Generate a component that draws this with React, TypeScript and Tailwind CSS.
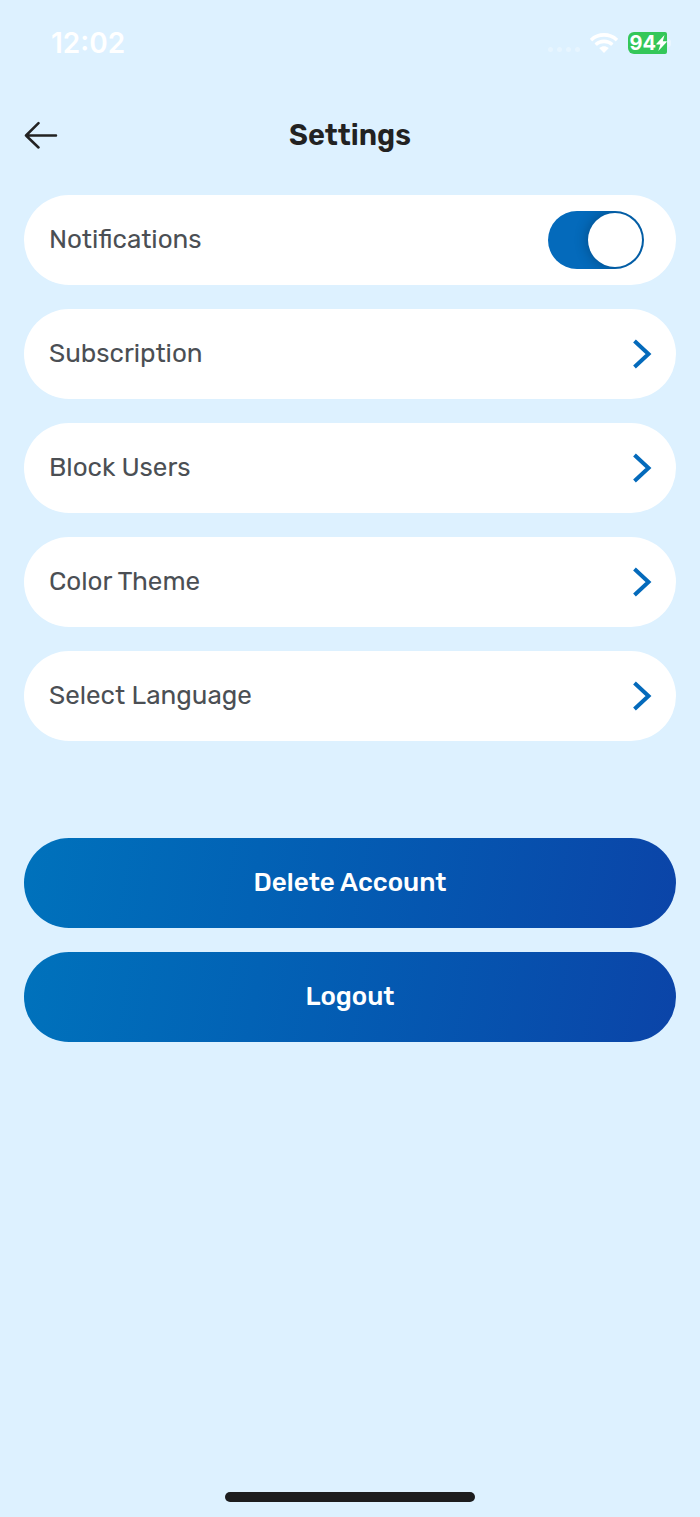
import React, { useState } from 'react';

const menuItems = ['Subscription', 'Block Users', 'Color Theme', 'Select Language'];

const accountActions = ['Delete Account', 'Logout'];

const StatusBar = () => (
    <div className="flex h-[86px] items-center justify-between pl-[51px] pr-[29px] text-white">
        <span className="font-['Inter',sans-serif] text-[28px] leading-8 font-semibold">12:02</span>
        <div className="flex items-center">
            {/* Signal dots */}
            <div className="mt-3 mr-[10px] flex gap-1 opacity-30">
                {[0, 1, 2, 3].map((dot) => (
                    <span key={dot} className="h-[5px] w-[5px] rounded-full bg-white" />
                ))}
            </div>
            <svg className="mr-[10px] h-5 w-7" viewBox="0 0 28 20" fill="currentColor" aria-hidden="true">
                <path d="M14 0C8.700 0 3.800 2 .2 5.400c-.3.300-.3.600 0 .9l1.600 1.600c.3.300.6.300.9 0C5.700 5.100 9.700 3.800 14 3.800s8.300 1.300 11.300 4.100c.3.300.6.300.9 0l1.600-1.600c.3-.3.300-.6 0-.9C24.200 2 19.300 0 14 0Z" />
                <path d="M14 6.500c-3.500 0-6.700 1.300-9.100 3.500-.3.300-.3.600 0 .9l1.600 1.700c.3.300.6.300.9 0 1.800-1.500 4.100-2.300 6.600-2.300s4.800.8 6.600 2.300c.3.300.6.300.9 0l1.600-1.700c.3-.3.300-.6 0-.9C20.700 7.800 17.500 6.500 14 6.500Z" />
                <path d="M14 13.200c-1.700 0-3.200.6-4.400 1.500-.3.300-.3.600 0 .9l3.900 4c.3.300.7.300 1 0l3.900-4c.3-.3.300-.6 0-.9-1.200-.9-2.700-1.500-4.400-1.500Z" />
            </svg>
            <div className="flex items-center">
                <div className="flex h-[22px] w-[39px] items-center justify-end rounded-l-md rounded-r-xs bg-[#34c759]">
                    <span className="font-['Inter',sans-serif] text-xl leading-[22px] font-bold">94</span>
                    <svg className="h-4 w-[11px]" viewBox="0 0 11 16" fill="currentColor" aria-hidden="true">
                        <path d="M8.500 0 .4 8.700c-.3.400-.1.800.4.800h3.600L2.300 16l8.400-9c.3-.4.100-.8-.4-.8H6.800L8.500 0Z" />
                    </svg>
                </div>
                <span className="ml-px h-2 w-[3px] rounded-r-full bg-white opacity-40" />
            </div>
        </div>
    </div>
);

export default function App() {
    const [notifications, setNotifications] = useState(true);

    return (
        <div className="flex min-h-screen flex-col bg-[#ddf1ff] font-['Rubik','Roboto',sans-serif]">
            <StatusBar />

            {/* Header */}
            <header className="grid h-[98px] grid-cols-[40px_1fr_40px] items-center px-6">
                <button type="button" aria-label="Back" className="flex h-10 w-10 items-center text-[#222222]">
                    <svg
                        className="h-7 w-[34px]"
                        viewBox="0 0 34 28"
                        fill="none"
                        stroke="currentColor"
                        strokeWidth="2.5"
                        strokeLinecap="round"
                        strokeLinejoin="round"
                        aria-hidden="true"
                    >
                        <path d="M14.500 2.200 2 14.500l12.500 12M2 14.500h30" />
                    </svg>
                </button>
                <h1 className="text-center text-[29px] leading-9 font-semibold text-[#222222]">Settings</h1>
            </header>

            <main className="flex flex-1 flex-col px-6 pt-[11px]">
                <div className="flex flex-col gap-6">
                    <label className="flex h-[90px] cursor-pointer items-center justify-between rounded-full bg-white pr-8 pl-[25px]">
                        <span className="text-[26px] leading-8 text-[#4b4f54]">Notifications</span>
                        <input
                            type="checkbox"
                            role="switch"
                            checked={notifications}
                            onChange={(e) => setNotifications(e.target.checked)}
                            className="flex h-[58px] w-24 cursor-pointer appearance-none items-center overflow-hidden rounded-full bg-gray-300 px-[2px] transition-colors before:h-[54px] before:w-[54px] before:rounded-full before:bg-white before:shadow-[0_0_14px_rgba(0,0,0,0.3)] before:transition-transform checked:bg-[#046abb] checked:before:translate-x-[38px]"
                        />
                    </label>

                    {menuItems.map((item) => (
                        <button
                            key={item}
                            type="button"
                            className="flex h-[90px] cursor-pointer items-center justify-between rounded-full bg-white pr-6 pl-[25px]"
                        >
                            <span className="text-[26px] leading-8 text-[#4b4f54]">{item}</span>
                            <svg
                                className="h-8 w-5"
                                viewBox="0 0 20 32"
                                fill="none"
                                stroke="#046abb"
                                strokeWidth="4"
                                aria-hidden="true"
                            >
                                <path d="M2.500 3 16.500 16 2.500 29" />
                            </svg>
                        </button>
                    ))}
                </div>

                {/* Account actions */}
                <div className="mt-[97px] flex flex-col gap-6">
                    {accountActions.map((action) => (
                        <button
                            key={action}
                            type="button"
                            className="h-[90px] cursor-pointer rounded-full bg-linear-100 from-[#0072bc] to-[#0b44a8] text-[26px] leading-8 font-medium text-white"
                        >
                            {action}
                        </button>
                    ))}
                </div>
            </main>

            {/* Home indicator */}
            <div className="flex justify-center pb-[15px]">
                <div className="h-[10px] w-[250px] rounded-full bg-[#1c1c1e]" />
            </div>
        </div>
    );
}
